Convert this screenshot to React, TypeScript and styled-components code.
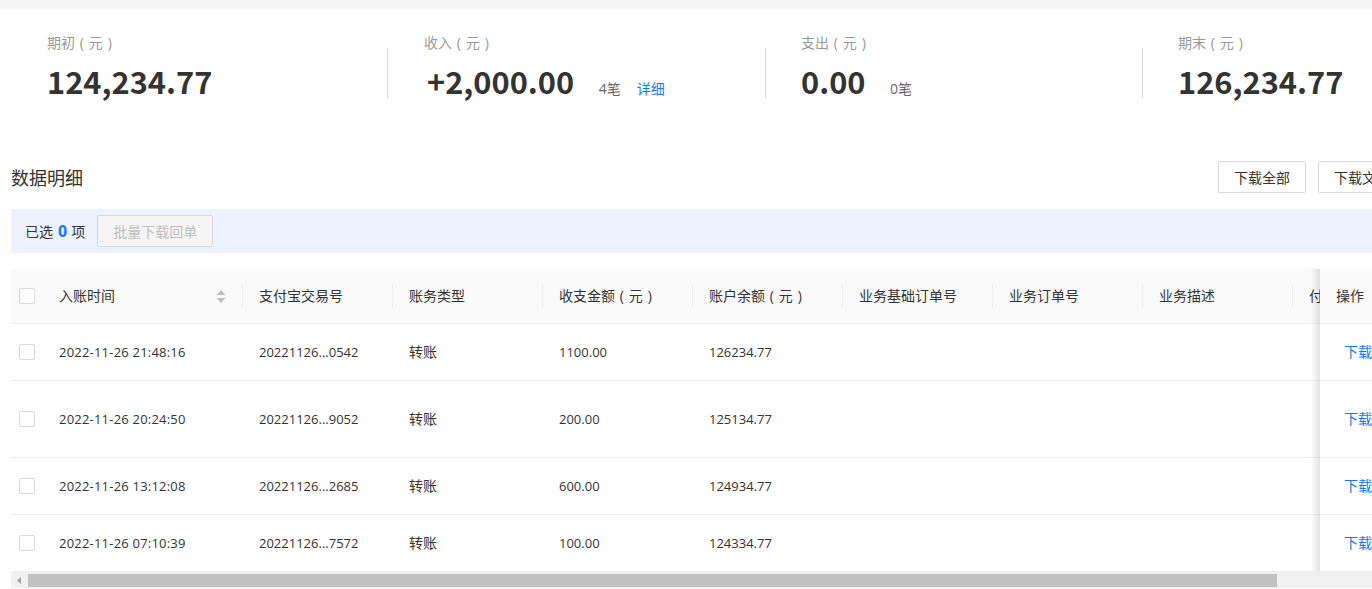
import React from 'react'
import styled, { createGlobalStyle } from 'styled-components'

const GlobalStyle = createGlobalStyle`
  html, body {
    margin: 0;
    padding: 0;
    background: #fff;
    overflow: hidden;
  }
  body {
    font-family: "Open Sans", "Noto Sans CJK SC", sans-serif;
    font-size: 13px;
    color: #333;
  }
`

const Page = styled.div`
  width: 1372px;
  height: 589px;
  overflow: hidden;
`

const TopStrip = styled.div`
  height: 9px;
  background: #f5f5f5;
`

const Stats = styled.div`
  display: flex;
  width: 1600px;
  padding: 25px 0 0 47px;
  height: 126px;
  box-sizing: border-box;
`

const Stat = styled.div`
  width: 377px;
  flex: none;
  position: relative;
`

const StatLabel = styled.div`
  font-size: 14px;
  line-height: 18px;
  color: #999;
  word-spacing: 1.2px;
`

const StatRow = styled.div`
  display: flex;
  align-items: baseline;
  margin-top: 7px;
`

const StatValue = styled.div<{ $signed?: boolean }>`
  font-size: 30.8px;
  line-height: 44px;
  font-weight: 700;
  color: #333;
  font-family: "Noto Sans CJK SC", sans-serif;
  padding-left: ${(p) => (p.$signed ? 3 : 0)}px;
`

const StatCount = styled.span`
  font-size: 14px;
  color: #666;
  margin-left: 24.5px;
`

const DetailLink = styled.a`
  font-size: 14px;
  color: #1677ff;
  margin-left: 16px;
`

const StatDivider = styled.div<{ $left: number }>`
  position: absolute;
  left: ${(p) => p.$left}px;
  top: 14px;
  width: 1px;
  height: 50px;
  background: #d9d9d9;
`

const SectionHead = styled.div`
  display: flex;
  align-items: flex-start;
  height: 32px;
  margin-top: 26px;
  padding-left: 11px;
`

const SectionTitle = styled.h2`
  margin: 0;
  font-size: 18px;
  font-weight: 400;
  color: #333;
  line-height: 34px;
  flex: none;
  width: 1207px;
`

const OutlineButton = styled.button`
  flex: none;
  width: 88px;
  height: 32px;
  margin-right: 12px;
  background: #fff;
  border: 1px solid #d9d9d9;
  border-radius: 2px;
  font: inherit;
  font-size: 14px;
  color: #333;
  padding: 0;
  white-space: nowrap;
`

const SelectBar = styled.div`
  display: flex;
  align-items: center;
  height: 44px;
  margin: 16px 0 16px 11px;
  padding: 0 14px;
  background: #ecf3fe;
  font-size: 14px;
  color: #333;
`

const SelectedCount = styled.b`
  color: #1677ff;
  font-size: 16px;
  margin: 0 4px 0 5px;
`

const BatchButton = styled.button`
  width: 116px;
  height: 32px;
  margin-left: 12px;
  background: #f5f5f5;
  border: 1px solid #d9d9d9;
  border-radius: 2px;
  font: inherit;
  font-size: 14px;
  color: #bfbfbf;
  padding: 0;
`

const TableWrap = styled.div`
  display: flex;
  margin-left: 11px;
`

const ScrollArea = styled.div`
  width: 1309px;
  overflow: hidden;
  flex: none;
`

const Row = styled.div<{ $h: number; $head?: boolean; $last?: boolean }>`
  display: flex;
  box-sizing: border-box;
  align-items: center;
  width: 1600px;
  height: ${(p) => p.$h}px;
  background: ${(p) => (p.$head ? '#fafafa' : '#fff')};
  border-bottom: ${(p) => (p.$last ? 'none' : '1px solid #eeeeee')};
`

const Check = styled.span`
  flex: none;
  box-sizing: border-box;
  width: 16px;
  height: 16px;
  margin-left: 8px;
  margin-right: 8px;
  border: 1px solid #d9d9d9;
  border-radius: 2px;
  background: #fff;
`

const Cell = styled.div<{ $w: number; $divider?: boolean; $first?: boolean }>`
  flex: none;
  box-sizing: border-box;
  position: relative;
  width: ${(p) => p.$w}px;
  padding-left: ${(p) => (p.$first ? 16 : 17)}px;
  font-size: 13px;
  white-space: nowrap;
  color: #333;
  display: flex;
  align-items: center;
  justify-content: space-between;

  ${(p) =>
    p.$divider &&
    `&::before {
      content: '';
      position: absolute;
      left: 0;
      top: 50%;
      height: 22px;
      margin-top: -11px;
      width: 1px;
      background: #eeeeee;
    }`}
`

const TimeText = styled.span`
  letter-spacing: 0.21px;
`

const TypeText = styled.span`
  font-size: 14px;
  margin-top: -2px;
`

const HeadText = styled.span`
  font-size: 14px;
  color: #333;
  margin-top: -2px;
  word-spacing: 1.2px;
`

const Sorter = styled.svg`
  flex: none;
  width: 10px;
  height: 13px;
  margin-right: 16px;
`

const FixedCol = styled.div`
  flex: 1;
  background: #fff;
  position: relative;
  z-index: 1;

  &::before {
    content: '';
    position: absolute;
    top: 0;
    bottom: 0;
    left: -9px;
    width: 9px;
    background: linear-gradient(to left, rgba(0, 0, 0, 0.11), rgba(0, 0, 0, 0));
  }
`

const FixedCell = styled.div<{ $h: number; $head?: boolean; $last?: boolean }>`
  box-sizing: border-box;
  height: ${(p) => p.$h}px;
  display: flex;
  align-items: center;
  white-space: nowrap;
  overflow: hidden;
  padding-left: ${(p) => (p.$head ? 16 : 24)}px;
  padding-bottom: 2px;
  background: ${(p) => (p.$head ? '#fafafa' : '#fff')};
  border-bottom: ${(p) => (p.$last ? 'none' : '1px solid #eeeeee')};
  font-size: 14px;
  color: ${(p) => (p.$head ? '#333' : '#1677ff')};
`

const Scrollbar = styled.div`
  display: flex;
  align-items: center;
  height: 17px;
  margin-left: 11px;
  background: #f0f0f0;
`

const ScrollArrow = styled.svg`
  flex: none;
  width: 17px;
  height: 17px;
  margin-top: 2px;
`

const ScrollThumb = styled.div`
  flex: none;
  width: 1249px;
  height: 13px;
  margin-top: 2px;
  background: #c1c1c1;
`

const stats = [
  { label: '期初 ( 元 )', value: '124,234.77' },
  { label: '收入 ( 元 )', value: '+2,000.00', count: '4笔', detail: true, divider: -37 },
  { label: '支出 ( 元 )', value: '0.00', count: '0笔', divider: -36 },
  { label: '期末 ( 元 )', value: '126,234.77', divider: -36 }
]

const columns = [
  { title: '支付宝交易号', w: 150 },
  { title: '账务类型', w: 150 },
  { title: '收支金额 ( 元 )', w: 150 },
  { title: '账户余额 ( 元 )', w: 150 },
  { title: '业务基础订单号', w: 150 },
  { title: '业务订单号', w: 150 },
  { title: '业务描述', w: 150 },
  { title: '付款备注', w: 150 }
]

const rows = [
  { h: 57, time: '2022-11-26 21:48:16', no: '20221126...0542', amount: '1100.00', balance: '126234.77' },
  { h: 77, time: '2022-11-26 20:24:50', no: '20221126...9052', amount: '200.00', balance: '125134.77' },
  { h: 57, time: '2022-11-26 13:12:08', no: '20221126...2685', amount: '600.00', balance: '124934.77' },
  { h: 56, time: '2022-11-26 07:10:39', no: '20221126...7572', amount: '100.00', balance: '124334.77' }
]

export default function App() {
  return (
    <Page>
      <GlobalStyle />
      <TopStrip />
      <Stats>
        {stats.map((s) => (
          <Stat key={s.label}>
            {s.divider !== undefined && <StatDivider $left={s.divider} />}
            <StatLabel>{s.label}</StatLabel>
            <StatRow>
              <StatValue $signed={s.value.startsWith('+')}>{s.value}</StatValue>
              {s.count && <StatCount>{s.count}</StatCount>}
              {s.detail && <DetailLink>详细</DetailLink>}
            </StatRow>
          </Stat>
        ))}
      </Stats>

      <SectionHead>
        <SectionTitle>数据明细</SectionTitle>
        <OutlineButton>下载全部</OutlineButton>
        <OutlineButton>下载文件</OutlineButton>
      </SectionHead>

      <SelectBar>
        已选<SelectedCount>0</SelectedCount>项
        <BatchButton disabled>批量下载回单</BatchButton>
      </SelectBar>

      <TableWrap>
        <ScrollArea>
          <Row $h={55} $head>
            <Check />
            <Cell $w={199} $first>
              <HeadText>入账时间</HeadText>
              <Sorter viewBox="0 0 10 13">
                <path d="M5 0 L9.5 5 H0.5 Z M0.5 8 H9.5 L5 13 Z" fill="#bfbfbf" />
              </Sorter>
            </Cell>
            {columns.map((c) => (
              <Cell key={c.title} $w={c.w} $divider>
                <HeadText>{c.title}</HeadText>
              </Cell>
            ))}
          </Row>
          {rows.map((r, i) => (
            <Row key={r.no} $h={r.h} $last={i === rows.length - 1}>
              <Check />
              <Cell $w={199} $first><TimeText>{r.time}</TimeText></Cell>
              <Cell $w={150}>{r.no}</Cell>
              <Cell $w={150}><TypeText>转账</TypeText></Cell>
              <Cell $w={150}>{r.amount}</Cell>
              <Cell $w={150}>{r.balance}</Cell>
            </Row>
          ))}
        </ScrollArea>
        <FixedCol>
          <FixedCell $h={55} $head>操作</FixedCell>
          {rows.map((r, i) => (
            <FixedCell key={r.no} $h={r.h} $last={i === rows.length - 1}>下载回单</FixedCell>
          ))}
        </FixedCol>
      </TableWrap>

      <Scrollbar>
        <ScrollArrow viewBox="0 0 17 17">
          <path d="M6 8.5 L10 5 V12 Z" fill="#a0a0a0" />
        </ScrollArrow>
        <ScrollThumb />
      </Scrollbar>
    </Page>
  )
}
